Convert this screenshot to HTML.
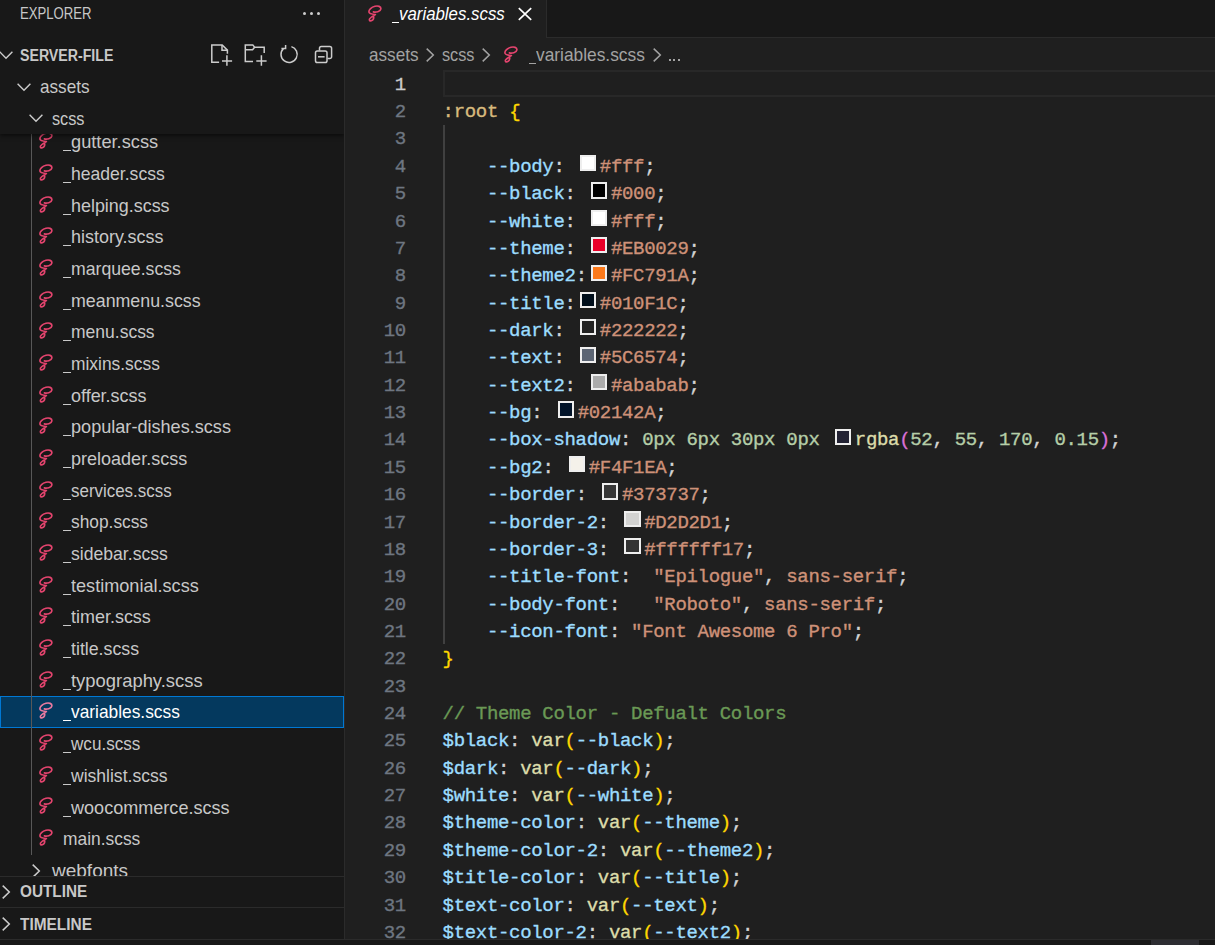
<!DOCTYPE html>
<html><head><meta charset="utf-8"><title>_variables.scss</title>
<style>
html,body{margin:0;padding:0;background:#1f1f1f;overflow:hidden}
body{width:1215px;height:945px;position:relative;font-family:"Liberation Sans",sans-serif}
.ab,.t,.sass{position:absolute}
.t{white-space:pre;transform-origin:0 50%;}
#side{position:absolute;left:0;top:0;width:344px;height:945px;background:#181818;overflow:hidden}
#sideborder{position:absolute;left:344px;top:0;width:1px;height:945px;background:#2b2b2b}
#ed{position:absolute;left:345px;top:0;width:870px;height:945px;background:#1f1f1f;overflow:hidden}
.ln,.cl{position:absolute;font-family:"Liberation Mono",monospace;white-space:pre;-webkit-text-stroke:0.35px;font-size:19.00px;line-height:27.36px;height:27.36px;letter-spacing:-0.316px;}
.ln{color:#6e7681;text-align:right}
.cl{color:#d4d4d4}
.sw{display:inline-block;position:relative;vertical-align:top}
.sw i{position:absolute;box-sizing:border-box;border:2px solid #eeeeee}
.p{color:#9cdcfe}.s{color:#ce9178}.n{color:#b5cea8}.f{color:#dcdcaa}.c{color:#6a9955}.y{color:#ffd700}.m{color:#da70d6}.r{color:#d7ba7d}.w{color:#d4d4d4}
</style></head><body>

<div id="side">
<svg class="sass" style="left:37.90px;top:131.14px" width="16" height="19" viewBox="-1 -1 16 19"><path d="M5.4 6.9C7.6 7.5 12.5 6.8 12.9 3.8C13.1 1.4 10 0.6 7 1.3C3.4 2.2 0.7 4.8 0.9 7C1.1 9 4.4 9.3 7.4 9.6C5.8 10.5 2.6 12.3 1.6 13.9C0.8 15.4 2 16.1 3.3 15.7C5 15.1 6 13.3 5.6 11.4" fill="none" stroke="#e4446e" stroke-width="1.65" stroke-linecap="round" stroke-linejoin="round"/></svg>
<div class="ab" style="left:63.40px;top:150px;width:7.27px;height:1.2px;background:#c8c8c8"></div><span class="t" style="transform:scaleX(0.9747);left:70.97px;top:126.84px;font-size:18.72px;line-height:29.95px;color:#c8c8c8;font-weight:normal;font-style:normal;transform-origin:0 21.46px;">gutter.scss</span>
<svg class="sass" style="left:37.90px;top:162.82px" width="16" height="19" viewBox="-1 -1 16 19"><path d="M5.4 6.9C7.6 7.5 12.5 6.8 12.9 3.8C13.1 1.4 10 0.6 7 1.3C3.4 2.2 0.7 4.8 0.9 7C1.1 9 4.4 9.3 7.4 9.6C5.8 10.5 2.6 12.3 1.6 13.9C0.8 15.4 2 16.1 3.3 15.7C5 15.1 6 13.3 5.6 11.4" fill="none" stroke="#e4446e" stroke-width="1.65" stroke-linecap="round" stroke-linejoin="round"/></svg>
<div class="ab" style="left:63.40px;top:182px;width:7.27px;height:1.2px;background:#c8c8c8"></div><span class="t" style="transform:scaleX(0.9394);left:70.97px;top:158.84px;font-size:18.72px;line-height:29.95px;color:#c8c8c8;font-weight:normal;font-style:normal;transform-origin:0 21.46px;">header.scss</span>
<svg class="sass" style="left:37.90px;top:194.50px" width="16" height="19" viewBox="-1 -1 16 19"><path d="M5.4 6.9C7.6 7.5 12.5 6.8 12.9 3.8C13.1 1.4 10 0.6 7 1.3C3.4 2.2 0.7 4.8 0.9 7C1.1 9 4.4 9.3 7.4 9.6C5.8 10.5 2.6 12.3 1.6 13.9C0.8 15.4 2 16.1 3.3 15.7C5 15.1 6 13.3 5.6 11.4" fill="none" stroke="#e4446e" stroke-width="1.65" stroke-linecap="round" stroke-linejoin="round"/></svg>
<div class="ab" style="left:63.40px;top:214px;width:7.27px;height:1.2px;background:#c8c8c8"></div><span class="t" style="transform:scaleX(0.9578);left:70.97px;top:190.84px;font-size:18.72px;line-height:29.95px;color:#c8c8c8;font-weight:normal;font-style:normal;transform-origin:0 21.46px;">helping.scss</span>
<svg class="sass" style="left:37.90px;top:226.18px" width="16" height="19" viewBox="-1 -1 16 19"><path d="M5.4 6.9C7.6 7.5 12.5 6.8 12.9 3.8C13.1 1.4 10 0.6 7 1.3C3.4 2.2 0.7 4.8 0.9 7C1.1 9 4.4 9.3 7.4 9.6C5.8 10.5 2.6 12.3 1.6 13.9C0.8 15.4 2 16.1 3.3 15.7C5 15.1 6 13.3 5.6 11.4" fill="none" stroke="#e4446e" stroke-width="1.65" stroke-linecap="round" stroke-linejoin="round"/></svg>
<div class="ab" style="left:63.40px;top:245px;width:7.27px;height:1.2px;background:#c8c8c8"></div><span class="t" style="transform:scaleX(0.9602);left:70.97px;top:221.84px;font-size:18.72px;line-height:29.95px;color:#c8c8c8;font-weight:normal;font-style:normal;transform-origin:0 21.46px;">history.scss</span>
<svg class="sass" style="left:37.90px;top:257.86px" width="16" height="19" viewBox="-1 -1 16 19"><path d="M5.4 6.9C7.6 7.5 12.5 6.8 12.9 3.8C13.1 1.4 10 0.6 7 1.3C3.4 2.2 0.7 4.8 0.9 7C1.1 9 4.4 9.3 7.4 9.6C5.8 10.5 2.6 12.3 1.6 13.9C0.8 15.4 2 16.1 3.3 15.7C5 15.1 6 13.3 5.6 11.4" fill="none" stroke="#e4446e" stroke-width="1.65" stroke-linecap="round" stroke-linejoin="round"/></svg>
<div class="ab" style="left:63.40px;top:277px;width:7.27px;height:1.2px;background:#c8c8c8"></div><span class="t" style="transform:scaleX(0.9439);left:70.97px;top:253.84px;font-size:18.72px;line-height:29.95px;color:#c8c8c8;font-weight:normal;font-style:normal;transform-origin:0 21.46px;">marquee.scss</span>
<svg class="sass" style="left:37.90px;top:289.54px" width="16" height="19" viewBox="-1 -1 16 19"><path d="M5.4 6.9C7.6 7.5 12.5 6.8 12.9 3.8C13.1 1.4 10 0.6 7 1.3C3.4 2.2 0.7 4.8 0.9 7C1.1 9 4.4 9.3 7.4 9.6C5.8 10.5 2.6 12.3 1.6 13.9C0.8 15.4 2 16.1 3.3 15.7C5 15.1 6 13.3 5.6 11.4" fill="none" stroke="#e4446e" stroke-width="1.65" stroke-linecap="round" stroke-linejoin="round"/></svg>
<div class="ab" style="left:63.40px;top:309px;width:7.27px;height:1.2px;background:#c8c8c8"></div><span class="t" style="transform:scaleX(0.9520);left:70.97px;top:285.84px;font-size:18.72px;line-height:29.95px;color:#c8c8c8;font-weight:normal;font-style:normal;transform-origin:0 21.46px;">meanmenu.scss</span>
<svg class="sass" style="left:37.90px;top:321.22px" width="16" height="19" viewBox="-1 -1 16 19"><path d="M5.4 6.9C7.6 7.5 12.5 6.8 12.9 3.8C13.1 1.4 10 0.6 7 1.3C3.4 2.2 0.7 4.8 0.9 7C1.1 9 4.4 9.3 7.4 9.6C5.8 10.5 2.6 12.3 1.6 13.9C0.8 15.4 2 16.1 3.3 15.7C5 15.1 6 13.3 5.6 11.4" fill="none" stroke="#e4446e" stroke-width="1.65" stroke-linecap="round" stroke-linejoin="round"/></svg>
<div class="ab" style="left:63.40px;top:340px;width:7.27px;height:1.2px;background:#c8c8c8"></div><span class="t" style="transform:scaleX(0.9355);left:70.97px;top:316.84px;font-size:18.72px;line-height:29.95px;color:#c8c8c8;font-weight:normal;font-style:normal;transform-origin:0 21.46px;">menu.scss</span>
<svg class="sass" style="left:37.90px;top:352.90px" width="16" height="19" viewBox="-1 -1 16 19"><path d="M5.4 6.9C7.6 7.5 12.5 6.8 12.9 3.8C13.1 1.4 10 0.6 7 1.3C3.4 2.2 0.7 4.8 0.9 7C1.1 9 4.4 9.3 7.4 9.6C5.8 10.5 2.6 12.3 1.6 13.9C0.8 15.4 2 16.1 3.3 15.7C5 15.1 6 13.3 5.6 11.4" fill="none" stroke="#e4446e" stroke-width="1.65" stroke-linecap="round" stroke-linejoin="round"/></svg>
<div class="ab" style="left:63.40px;top:372px;width:7.27px;height:1.2px;background:#c8c8c8"></div><span class="t" style="transform:scaleX(0.9291);left:70.97px;top:348.84px;font-size:18.72px;line-height:29.95px;color:#c8c8c8;font-weight:normal;font-style:normal;transform-origin:0 21.46px;">mixins.scss</span>
<svg class="sass" style="left:37.90px;top:384.58px" width="16" height="19" viewBox="-1 -1 16 19"><path d="M5.4 6.9C7.6 7.5 12.5 6.8 12.9 3.8C13.1 1.4 10 0.6 7 1.3C3.4 2.2 0.7 4.8 0.9 7C1.1 9 4.4 9.3 7.4 9.6C5.8 10.5 2.6 12.3 1.6 13.9C0.8 15.4 2 16.1 3.3 15.7C5 15.1 6 13.3 5.6 11.4" fill="none" stroke="#e4446e" stroke-width="1.65" stroke-linecap="round" stroke-linejoin="round"/></svg>
<div class="ab" style="left:63.40px;top:404px;width:7.27px;height:1.2px;background:#c8c8c8"></div><span class="t" style="transform:scaleX(0.9599);left:70.97px;top:380.84px;font-size:18.72px;line-height:29.95px;color:#c8c8c8;font-weight:normal;font-style:normal;transform-origin:0 21.46px;">offer.scss</span>
<svg class="sass" style="left:37.90px;top:416.26px" width="16" height="19" viewBox="-1 -1 16 19"><path d="M5.4 6.9C7.6 7.5 12.5 6.8 12.9 3.8C13.1 1.4 10 0.6 7 1.3C3.4 2.2 0.7 4.8 0.9 7C1.1 9 4.4 9.3 7.4 9.6C5.8 10.5 2.6 12.3 1.6 13.9C0.8 15.4 2 16.1 3.3 15.7C5 15.1 6 13.3 5.6 11.4" fill="none" stroke="#e4446e" stroke-width="1.65" stroke-linecap="round" stroke-linejoin="round"/></svg>
<div class="ab" style="left:63.40px;top:435px;width:7.27px;height:1.2px;background:#c8c8c8"></div><span class="t" style="transform:scaleX(0.9678);left:70.97px;top:411.84px;font-size:18.72px;line-height:29.95px;color:#c8c8c8;font-weight:normal;font-style:normal;transform-origin:0 21.46px;">popular-dishes.scss</span>
<svg class="sass" style="left:37.90px;top:447.94px" width="16" height="19" viewBox="-1 -1 16 19"><path d="M5.4 6.9C7.6 7.5 12.5 6.8 12.9 3.8C13.1 1.4 10 0.6 7 1.3C3.4 2.2 0.7 4.8 0.9 7C1.1 9 4.4 9.3 7.4 9.6C5.8 10.5 2.6 12.3 1.6 13.9C0.8 15.4 2 16.1 3.3 15.7C5 15.1 6 13.3 5.6 11.4" fill="none" stroke="#e4446e" stroke-width="1.65" stroke-linecap="round" stroke-linejoin="round"/></svg>
<div class="ab" style="left:63.40px;top:467px;width:7.27px;height:1.2px;background:#c8c8c8"></div><span class="t" style="transform:scaleX(0.9635);left:70.97px;top:443.84px;font-size:18.72px;line-height:29.95px;color:#c8c8c8;font-weight:normal;font-style:normal;transform-origin:0 21.46px;">preloader.scss</span>
<svg class="sass" style="left:37.90px;top:479.62px" width="16" height="19" viewBox="-1 -1 16 19"><path d="M5.4 6.9C7.6 7.5 12.5 6.8 12.9 3.8C13.1 1.4 10 0.6 7 1.3C3.4 2.2 0.7 4.8 0.9 7C1.1 9 4.4 9.3 7.4 9.6C5.8 10.5 2.6 12.3 1.6 13.9C0.8 15.4 2 16.1 3.3 15.7C5 15.1 6 13.3 5.6 11.4" fill="none" stroke="#e4446e" stroke-width="1.65" stroke-linecap="round" stroke-linejoin="round"/></svg>
<div class="ab" style="left:63.40px;top:499px;width:7.27px;height:1.2px;background:#c8c8c8"></div><span class="t" style="transform:scaleX(0.9050);left:70.97px;top:475.84px;font-size:18.72px;line-height:29.95px;color:#c8c8c8;font-weight:normal;font-style:normal;transform-origin:0 21.46px;">services.scss</span>
<svg class="sass" style="left:37.90px;top:511.30px" width="16" height="19" viewBox="-1 -1 16 19"><path d="M5.4 6.9C7.6 7.5 12.5 6.8 12.9 3.8C13.1 1.4 10 0.6 7 1.3C3.4 2.2 0.7 4.8 0.9 7C1.1 9 4.4 9.3 7.4 9.6C5.8 10.5 2.6 12.3 1.6 13.9C0.8 15.4 2 16.1 3.3 15.7C5 15.1 6 13.3 5.6 11.4" fill="none" stroke="#e4446e" stroke-width="1.65" stroke-linecap="round" stroke-linejoin="round"/></svg>
<div class="ab" style="left:63.40px;top:530px;width:7.27px;height:1.2px;background:#c8c8c8"></div><span class="t" style="transform:scaleX(0.9262);left:70.97px;top:506.84px;font-size:18.72px;line-height:29.95px;color:#c8c8c8;font-weight:normal;font-style:normal;transform-origin:0 21.46px;">shop.scss</span>
<svg class="sass" style="left:37.90px;top:542.98px" width="16" height="19" viewBox="-1 -1 16 19"><path d="M5.4 6.9C7.6 7.5 12.5 6.8 12.9 3.8C13.1 1.4 10 0.6 7 1.3C3.4 2.2 0.7 4.8 0.9 7C1.1 9 4.4 9.3 7.4 9.6C5.8 10.5 2.6 12.3 1.6 13.9C0.8 15.4 2 16.1 3.3 15.7C5 15.1 6 13.3 5.6 11.4" fill="none" stroke="#e4446e" stroke-width="1.65" stroke-linecap="round" stroke-linejoin="round"/></svg>
<div class="ab" style="left:63.40px;top:562px;width:7.27px;height:1.2px;background:#c8c8c8"></div><span class="t" style="transform:scaleX(0.9411);left:70.97px;top:538.84px;font-size:18.72px;line-height:29.95px;color:#c8c8c8;font-weight:normal;font-style:normal;transform-origin:0 21.46px;">sidebar.scss</span>
<svg class="sass" style="left:37.90px;top:574.66px" width="16" height="19" viewBox="-1 -1 16 19"><path d="M5.4 6.9C7.6 7.5 12.5 6.8 12.9 3.8C13.1 1.4 10 0.6 7 1.3C3.4 2.2 0.7 4.8 0.9 7C1.1 9 4.4 9.3 7.4 9.6C5.8 10.5 2.6 12.3 1.6 13.9C0.8 15.4 2 16.1 3.3 15.7C5 15.1 6 13.3 5.6 11.4" fill="none" stroke="#e4446e" stroke-width="1.65" stroke-linecap="round" stroke-linejoin="round"/></svg>
<div class="ab" style="left:63.40px;top:594px;width:7.27px;height:1.2px;background:#c8c8c8"></div><span class="t" style="transform:scaleX(0.9678);left:70.97px;top:570.84px;font-size:18.72px;line-height:29.95px;color:#c8c8c8;font-weight:normal;font-style:normal;transform-origin:0 21.46px;">testimonial.scss</span>
<svg class="sass" style="left:37.90px;top:606.34px" width="16" height="19" viewBox="-1 -1 16 19"><path d="M5.4 6.9C7.6 7.5 12.5 6.8 12.9 3.8C13.1 1.4 10 0.6 7 1.3C3.4 2.2 0.7 4.8 0.9 7C1.1 9 4.4 9.3 7.4 9.6C5.8 10.5 2.6 12.3 1.6 13.9C0.8 15.4 2 16.1 3.3 15.7C5 15.1 6 13.3 5.6 11.4" fill="none" stroke="#e4446e" stroke-width="1.65" stroke-linecap="round" stroke-linejoin="round"/></svg>
<div class="ab" style="left:63.40px;top:625px;width:7.27px;height:1.2px;background:#c8c8c8"></div><span class="t" style="transform:scaleX(0.9601);left:70.97px;top:601.84px;font-size:18.72px;line-height:29.95px;color:#c8c8c8;font-weight:normal;font-style:normal;transform-origin:0 21.46px;">timer.scss</span>
<svg class="sass" style="left:37.90px;top:638.02px" width="16" height="19" viewBox="-1 -1 16 19"><path d="M5.4 6.9C7.6 7.5 12.5 6.8 12.9 3.8C13.1 1.4 10 0.6 7 1.3C3.4 2.2 0.7 4.8 0.9 7C1.1 9 4.4 9.3 7.4 9.6C5.8 10.5 2.6 12.3 1.6 13.9C0.8 15.4 2 16.1 3.3 15.7C5 15.1 6 13.3 5.6 11.4" fill="none" stroke="#e4446e" stroke-width="1.65" stroke-linecap="round" stroke-linejoin="round"/></svg>
<div class="ab" style="left:63.40px;top:657px;width:7.27px;height:1.2px;background:#c8c8c8"></div><span class="t" style="transform:scaleX(0.9491);left:70.97px;top:633.84px;font-size:18.72px;line-height:29.95px;color:#c8c8c8;font-weight:normal;font-style:normal;transform-origin:0 21.46px;">title.scss</span>
<svg class="sass" style="left:37.90px;top:669.70px" width="16" height="19" viewBox="-1 -1 16 19"><path d="M5.4 6.9C7.6 7.5 12.5 6.8 12.9 3.8C13.1 1.4 10 0.6 7 1.3C3.4 2.2 0.7 4.8 0.9 7C1.1 9 4.4 9.3 7.4 9.6C5.8 10.5 2.6 12.3 1.6 13.9C0.8 15.4 2 16.1 3.3 15.7C5 15.1 6 13.3 5.6 11.4" fill="none" stroke="#e4446e" stroke-width="1.65" stroke-linecap="round" stroke-linejoin="round"/></svg>
<div class="ab" style="left:63.40px;top:689px;width:7.27px;height:1.2px;background:#c8c8c8"></div><span class="t" style="transform:scaleX(0.9841);left:70.97px;top:665.84px;font-size:18.72px;line-height:29.95px;color:#c8c8c8;font-weight:normal;font-style:normal;transform-origin:0 21.46px;">typography.scss</span>
<div class="ab" style="left:0;top:696.14px;width:344px;height:31.68px;background:#04395e;box-sizing:border-box;border:1px solid #0078d4"></div>
<svg class="sass" style="left:37.90px;top:701.38px" width="16" height="19" viewBox="-1 -1 16 19"><path d="M5.4 6.9C7.6 7.5 12.5 6.8 12.9 3.8C13.1 1.4 10 0.6 7 1.3C3.4 2.2 0.7 4.8 0.9 7C1.1 9 4.4 9.3 7.4 9.6C5.8 10.5 2.6 12.3 1.6 13.9C0.8 15.4 2 16.1 3.3 15.7C5 15.1 6 13.3 5.6 11.4" fill="none" stroke="#ea7aa0" stroke-width="1.65" stroke-linecap="round" stroke-linejoin="round"/></svg>
<div class="ab" style="left:63.40px;top:720px;width:7.27px;height:1.2px;background:#ffffff"></div><span class="t" style="transform:scaleX(0.9268);left:70.97px;top:696.84px;font-size:18.72px;line-height:29.95px;color:#ffffff;font-weight:normal;font-style:normal;transform-origin:0 21.46px;">variables.scss</span>
<svg class="sass" style="left:37.90px;top:733.06px" width="16" height="19" viewBox="-1 -1 16 19"><path d="M5.4 6.9C7.6 7.5 12.5 6.8 12.9 3.8C13.1 1.4 10 0.6 7 1.3C3.4 2.2 0.7 4.8 0.9 7C1.1 9 4.4 9.3 7.4 9.6C5.8 10.5 2.6 12.3 1.6 13.9C0.8 15.4 2 16.1 3.3 15.7C5 15.1 6 13.3 5.6 11.4" fill="none" stroke="#e4446e" stroke-width="1.65" stroke-linecap="round" stroke-linejoin="round"/></svg>
<div class="ab" style="left:63.40px;top:752px;width:7.27px;height:1.2px;background:#c8c8c8"></div><span class="t" style="transform:scaleX(0.9134);left:70.97px;top:728.84px;font-size:18.72px;line-height:29.95px;color:#c8c8c8;font-weight:normal;font-style:normal;transform-origin:0 21.46px;">wcu.scss</span>
<svg class="sass" style="left:37.90px;top:764.74px" width="16" height="19" viewBox="-1 -1 16 19"><path d="M5.4 6.9C7.6 7.5 12.5 6.8 12.9 3.8C13.1 1.4 10 0.6 7 1.3C3.4 2.2 0.7 4.8 0.9 7C1.1 9 4.4 9.3 7.4 9.6C5.8 10.5 2.6 12.3 1.6 13.9C0.8 15.4 2 16.1 3.3 15.7C5 15.1 6 13.3 5.6 11.4" fill="none" stroke="#e4446e" stroke-width="1.65" stroke-linecap="round" stroke-linejoin="round"/></svg>
<div class="ab" style="left:63.40px;top:784px;width:7.27px;height:1.2px;background:#c8c8c8"></div><span class="t" style="transform:scaleX(0.9375);left:70.97px;top:760.84px;font-size:18.72px;line-height:29.95px;color:#c8c8c8;font-weight:normal;font-style:normal;transform-origin:0 21.46px;">wishlist.scss</span>
<svg class="sass" style="left:37.90px;top:796.42px" width="16" height="19" viewBox="-1 -1 16 19"><path d="M5.4 6.9C7.6 7.5 12.5 6.8 12.9 3.8C13.1 1.4 10 0.6 7 1.3C3.4 2.2 0.7 4.8 0.9 7C1.1 9 4.4 9.3 7.4 9.6C5.8 10.5 2.6 12.3 1.6 13.9C0.8 15.4 2 16.1 3.3 15.7C5 15.1 6 13.3 5.6 11.4" fill="none" stroke="#e4446e" stroke-width="1.65" stroke-linecap="round" stroke-linejoin="round"/></svg>
<div class="ab" style="left:63.40px;top:816px;width:7.27px;height:1.2px;background:#c8c8c8"></div><span class="t" style="transform:scaleX(0.9658);left:70.97px;top:792.84px;font-size:18.72px;line-height:29.95px;color:#c8c8c8;font-weight:normal;font-style:normal;transform-origin:0 21.46px;">woocommerce.scss</span>
<svg class="sass" style="left:37.90px;top:828.10px" width="16" height="19" viewBox="-1 -1 16 19"><path d="M5.4 6.9C7.6 7.5 12.5 6.8 12.9 3.8C13.1 1.4 10 0.6 7 1.3C3.4 2.2 0.7 4.8 0.9 7C1.1 9 4.4 9.3 7.4 9.6C5.8 10.5 2.6 12.3 1.6 13.9C0.8 15.4 2 16.1 3.3 15.7C5 15.1 6 13.3 5.6 11.4" fill="none" stroke="#e4446e" stroke-width="1.65" stroke-linecap="round" stroke-linejoin="round"/></svg>
<span class="t" style="transform:scaleX(0.9295);left:63.20px;top:823.84px;font-size:18.72px;line-height:29.95px;color:#c8c8c8;font-weight:normal;font-style:normal;transform-origin:0 21.46px;">main.scss</span>
<svg class="ab" style="left:25.80px;top:860.88px" width="20" height="20" viewBox="-10 -10 20 20"><path d="M-3.3 -6.4 L3.3 0 L-3.3 6.4" fill="none" stroke="#cccccc" stroke-width="1.5"/></svg>
<span class="t" style="transform:scaleX(1.0158);left:51.80px;top:855.84px;font-size:18.72px;line-height:29.95px;color:#c8c8c8;font-weight:normal;font-style:normal;transform-origin:0 21.46px;">webfonts</span>
<div class="ab" style="left:31px;top:133px;width:1px;height:721.54px;background:#585858"></div>
<div class="ab" style="left:0;top:0;width:344px;height:134.2px;background:#181818;box-shadow:0 2px 4px rgba(0,0,0,.5)"></div>
<span class="t" style="transform:scale(0.8594,1.060);left:20.40px;top:1.86px;font-size:15.30px;line-height:24.48px;color:#c8c8c8;font-weight:normal;font-style:normal;transform-origin:0 17.54px;">EXPLORER</span>
<div class="ab" style="left:302.60px;top:11.7px;width:3.4px;height:3.4px;border-radius:50%;background:#cccccc"></div>
<div class="ab" style="left:309.70px;top:11.7px;width:3.4px;height:3.4px;border-radius:50%;background:#cccccc"></div>
<div class="ab" style="left:316.80px;top:11.7px;width:3.4px;height:3.4px;border-radius:50%;background:#cccccc"></div>
<svg class="ab" style="left:-3.70px;top:45.20px" width="20" height="20" viewBox="-10 -10 20 20"><path d="M-6.4 -3.3 L0 3.3 L6.4 -3.3" fill="none" stroke="#cccccc" stroke-width="1.4"/></svg>
<span class="t" style="transform:scale(0.9259,1.020);left:20.00px;top:43.76px;font-size:15.30px;line-height:24.48px;color:#c8c8c8;font-weight:bold;font-style:normal;transform-origin:0 17.54px;">SERVER-FILE</span>
<svg class="ab" style="left:208px;top:40px" width="130" height="30" viewBox="208 40 130 30" fill="none" stroke="#cccccc" stroke-width="1.5">
<path d="M219.1 62.3 H211.8 V44.9 H222.2 L227.4 50.1 V53.8"/><path d="M222 44.9 V50.3 H227.4"/><path d="M226.9 55.3 V65.8 M222 60.9 H232.1"/>
<path d="M253 61.6 H245.3 V44.9 H252.8 L254.6 47.3 H264.2 V53"/><path d="M245.3 49.8 H252.6 L254.6 47.3"/><path d="M261.4 55.3 V65.8 M256.3 60.9 H266.6"/>
<path d="M283.4 48.6 A8.1 8.1 0 1 0 291.4 46.6"/><path d="M281.4 48.6 H285.6 V44.9"/>
<rect x="315.5" y="51" width="11.5" height="11.5" rx="1.8"/><path d="M319.5 50.5 V48.3 A1.8 1.8 0 0 1 321.3 46.5 H329.8 A1.8 1.8 0 0 1 331.6 48.3 V56.8 A1.8 1.8 0 0 1 329.8 58.6 H327.5"/><path d="M318 56.8 H324.6"/>
</svg>
<svg class="ab" style="left:14.40px;top:76.90px" width="20" height="20" viewBox="-10 -10 20 20"><path d="M-6.4 -3.3 L0 3.3 L6.4 -3.3" fill="none" stroke="#cccccc" stroke-width="1.4"/></svg>
<span class="t" style="transform:scaleX(0.9152);left:40.30px;top:71.54px;font-size:18.72px;line-height:29.95px;color:#c8c8c8;font-weight:normal;font-style:normal;transform-origin:0 21.46px;">assets</span>
<svg class="ab" style="left:25.90px;top:108.10px" width="20" height="20" viewBox="-10 -10 20 20"><path d="M-6.4 -3.3 L0 3.3 L6.4 -3.3" fill="none" stroke="#cccccc" stroke-width="1.4"/></svg>
<span class="t" style="transform:scaleX(0.8678);left:51.80px;top:103.64px;font-size:18.72px;line-height:29.95px;color:#c8c8c8;font-weight:normal;font-style:normal;transform-origin:0 21.46px;">scss</span>
<div class="ab" style="left:0;top:875.6px;width:344px;height:32.68px;background:#181818;border-top:1px solid #2b2b2b"></div>
<svg class="ab" style="left:-4.00px;top:881.90px" width="20" height="20" viewBox="-10 -10 20 20"><path d="M-3.3 -6.4 L3.3 0 L-3.3 6.4" fill="none" stroke="#cccccc" stroke-width="1.5"/></svg>
<span class="t" style="transform:scale(1.0009,1.050);left:19.80px;top:880.16px;font-size:15.30px;line-height:24.48px;color:#c8c8c8;font-weight:bold;font-style:normal;transform-origin:0 17.54px;">OUTLINE</span>
<div class="ab" style="left:0;top:907.2px;width:344px;height:32.68px;background:#181818;border-top:1px solid #2b2b2b"></div>
<svg class="ab" style="left:-4.00px;top:913.50px" width="20" height="20" viewBox="-10 -10 20 20"><path d="M-3.3 -6.4 L3.3 0 L-3.3 6.4" fill="none" stroke="#cccccc" stroke-width="1.5"/></svg>
<span class="t" style="transform:scale(1.0085,1.050);left:19.80px;top:912.66px;font-size:15.30px;line-height:24.48px;color:#c8c8c8;font-weight:bold;font-style:normal;transform-origin:0 17.54px;">TIMELINE</span>
</div><div id="sideborder"></div>
<div id="ed">
<div class="ab" style="left:0;top:0;width:870px;height:37px;background:#181818;border-bottom:1.44px solid #2b2b2b"></div>
<div class="ab" style="left:0;top:0;width:201.3px;height:38px;background:#1f1f1f;border-right:1px solid #2b2b2b"></div>
<svg class="sass" style="left:21.60px;top:3.90px" width="16" height="19" viewBox="-1 -1 16 19"><path d="M5.4 6.9C7.6 7.5 12.5 6.8 12.9 3.8C13.1 1.4 10 0.6 7 1.3C3.4 2.2 0.7 4.8 0.9 7C1.1 9 4.4 9.3 7.4 9.6C5.8 10.5 2.6 12.3 1.6 13.9C0.8 15.4 2 16.1 3.3 15.7C5 15.1 6 13.3 5.6 11.4" fill="none" stroke="#e4446e" stroke-width="1.65" stroke-linecap="round" stroke-linejoin="round"/></svg>
<div class="ab" style="left:46.60px;top:22px;width:7.27px;height:1.2px;background:#ffffff"></div><span class="t" style="transform:scaleX(0.9002);left:54.17px;top:-0.96px;font-size:18.72px;line-height:29.95px;color:#ffffff;font-weight:normal;font-style:italic;transform-origin:0 21.46px;">variables.scss</span>
<svg class="ab" style="left:171.40px;top:4.60px" width="18" height="18" viewBox="-9 -9 18 18"><path d="M-6.2 -5.8 L6.2 5.8 M6.2 -5.8 L-6.2 5.8" stroke="#ffffff" stroke-width="1.7" fill="none"/></svg>
<span class="t" style="transform:scaleX(0.9152);left:24.20px;top:39.94px;font-size:18.72px;line-height:29.95px;color:#a3a3a3;font-weight:normal;font-style:normal;transform-origin:0 21.46px;">assets</span>
<svg class="ab" style="left:75.00px;top:45.20px" width="20" height="20" viewBox="-10 -10 20 20"><path d="M-3.3 -6.4 L3.3 0 L-3.3 6.4" fill="none" stroke="#a3a3a3" stroke-width="1.5"/></svg>
<span class="t" style="transform:scaleX(0.8678);left:96.80px;top:39.94px;font-size:18.72px;line-height:29.95px;color:#a3a3a3;font-weight:normal;font-style:normal;transform-origin:0 21.46px;">scss</span>
<svg class="ab" style="left:131.00px;top:45.20px" width="20" height="20" viewBox="-10 -10 20 20"><path d="M-3.3 -6.4 L3.3 0 L-3.3 6.4" fill="none" stroke="#a3a3a3" stroke-width="1.5"/></svg>
<svg class="sass" style="left:158.20px;top:45.20px" width="16" height="19" viewBox="-1 -1 16 19"><path d="M5.4 6.9C7.6 7.5 12.5 6.8 12.9 3.8C13.1 1.4 10 0.6 7 1.3C3.4 2.2 0.7 4.8 0.9 7C1.1 9 4.4 9.3 7.4 9.6C5.8 10.5 2.6 12.3 1.6 13.9C0.8 15.4 2 16.1 3.3 15.7C5 15.1 6 13.3 5.6 11.4" fill="none" stroke="#e4446e" stroke-width="1.65" stroke-linecap="round" stroke-linejoin="round"/></svg>
<div class="ab" style="left:183.80px;top:63px;width:7.27px;height:1.2px;background:#a3a3a3"></div><span class="t" style="transform:scaleX(0.9268);left:191.37px;top:39.94px;font-size:18.72px;line-height:29.95px;color:#a3a3a3;font-weight:normal;font-style:normal;transform-origin:0 21.46px;">variables.scss</span>
<svg class="ab" style="left:302.10px;top:45.20px" width="20" height="20" viewBox="-10 -10 20 20"><path d="M-3.3 -6.4 L3.3 0 L-3.3 6.4" fill="none" stroke="#a3a3a3" stroke-width="1.5"/></svg>
<div class="ab" style="left:323.60px;top:59.00px;width:2.2px;height:2.2px;background:#a3a3a3"></div>
<div class="ab" style="left:328.20px;top:59.00px;width:2.2px;height:2.2px;background:#a3a3a3"></div>
<div class="ab" style="left:332.80px;top:59.00px;width:2.2px;height:2.2px;background:#a3a3a3"></div>
<div class="ab" style="left:98.1px;top:70.10px;width:800px;height:26.86px;box-sizing:border-box;border:2px solid #282828"></div>
<div class="ab" style="left:98.1px;top:124.52px;width:1.44px;height:519.84px;background:#404040"></div>
<div class="ln" style="left:15px;width:45.82px;top:71.75px;color:#cccccc">1</div>
<div class="ln" style="left:15px;width:45.82px;top:99.11px;color:#6e7681">2</div>
<div class="cl" style="left:97.60px;top:99.11px"><span class="r">:root</span> <span class="y">{</span></div>
<div class="ln" style="left:15px;width:45.82px;top:126.47px;color:#6e7681">3</div>
<div class="ln" style="left:15px;width:45.82px;top:153.83px;color:#6e7681">4</div>
<div class="cl" style="left:97.60px;top:153.83px">    <span class="p">--body</span>: <span class="sw" style="width:24.19px;height:27.36px;letter-spacing:0"><i style="left:4.43px;top:1.25px;width:16.2px;height:16.2px;background:#fff"></i></span><span class="s">#fff</span>;</div>
<div class="ln" style="left:15px;width:45.82px;top:181.19px;color:#6e7681">5</div>
<div class="cl" style="left:97.60px;top:181.19px">    <span class="p">--black</span>: <span class="sw" style="width:24.19px;height:27.36px;letter-spacing:0"><i style="left:4.43px;top:1.25px;width:16.2px;height:16.2px;background:#000"></i></span><span class="s">#000</span>;</div>
<div class="ln" style="left:15px;width:45.82px;top:208.55px;color:#6e7681">6</div>
<div class="cl" style="left:97.60px;top:208.55px">    <span class="p">--white</span>: <span class="sw" style="width:24.19px;height:27.36px;letter-spacing:0"><i style="left:4.43px;top:1.25px;width:16.2px;height:16.2px;background:#fff"></i></span><span class="s">#fff</span>;</div>
<div class="ln" style="left:15px;width:45.82px;top:235.91px;color:#6e7681">7</div>
<div class="cl" style="left:97.60px;top:235.91px">    <span class="p">--theme</span>: <span class="sw" style="width:24.19px;height:27.36px;letter-spacing:0"><i style="left:4.43px;top:1.25px;width:16.2px;height:16.2px;background:#EB0029"></i></span><span class="s">#EB0029</span>;</div>
<div class="ln" style="left:15px;width:45.82px;top:263.27px;color:#6e7681">8</div>
<div class="cl" style="left:97.60px;top:263.27px">    <span class="p">--theme2</span>:<span class="sw" style="width:24.19px;height:27.36px;letter-spacing:0"><i style="left:4.43px;top:1.25px;width:16.2px;height:16.2px;background:#FC791A"></i></span><span class="s">#FC791A</span>;</div>
<div class="ln" style="left:15px;width:45.82px;top:290.63px;color:#6e7681">9</div>
<div class="cl" style="left:97.60px;top:290.63px">    <span class="p">--title</span>:<span class="sw" style="width:24.19px;height:27.36px;letter-spacing:0"><i style="left:4.43px;top:1.25px;width:16.2px;height:16.2px;background:#010F1C"></i></span><span class="s">#010F1C</span>;</div>
<div class="ln" style="left:15px;width:45.82px;top:317.99px;color:#6e7681">10</div>
<div class="cl" style="left:97.60px;top:317.99px">    <span class="p">--dark</span>: <span class="sw" style="width:24.19px;height:27.36px;letter-spacing:0"><i style="left:4.43px;top:1.25px;width:16.2px;height:16.2px;background:#222222"></i></span><span class="s">#222222</span>;</div>
<div class="ln" style="left:15px;width:45.82px;top:345.35px;color:#6e7681">11</div>
<div class="cl" style="left:97.60px;top:345.35px">    <span class="p">--text</span>: <span class="sw" style="width:24.19px;height:27.36px;letter-spacing:0"><i style="left:4.43px;top:1.25px;width:16.2px;height:16.2px;background:#5C6574"></i></span><span class="s">#5C6574</span>;</div>
<div class="ln" style="left:15px;width:45.82px;top:372.71px;color:#6e7681">12</div>
<div class="cl" style="left:97.60px;top:372.71px">    <span class="p">--text2</span>: <span class="sw" style="width:24.19px;height:27.36px;letter-spacing:0"><i style="left:4.43px;top:1.25px;width:16.2px;height:16.2px;background:#ababab"></i></span><span class="s">#ababab</span>;</div>
<div class="ln" style="left:15px;width:45.82px;top:400.07px;color:#6e7681">13</div>
<div class="cl" style="left:97.60px;top:400.07px">    <span class="p">--bg</span>: <span class="sw" style="width:24.19px;height:27.36px;letter-spacing:0"><i style="left:4.43px;top:1.25px;width:16.2px;height:16.2px;background:#02142A"></i></span><span class="s">#02142A</span>;</div>
<div class="ln" style="left:15px;width:45.82px;top:427.43px;color:#6e7681">14</div>
<div class="cl" style="left:97.60px;top:427.43px">    <span class="p">--box-shadow</span>: <span class="n">0px</span> <span class="n">6px</span> <span class="n">30px</span> <span class="n">0px</span> <span class="sw" style="width:24.19px;height:27.36px;letter-spacing:0"><i style="left:4.43px;top:1.25px;width:16.2px;height:16.2px;background:rgba(52,55,170,0.15)"></i></span><span class="f">rgba</span><span class="m">(</span><span class="n">52</span>, <span class="n">55</span>, <span class="n">170</span>, <span class="n">0.15</span><span class="m">)</span>;</div>
<div class="ln" style="left:15px;width:45.82px;top:454.79px;color:#6e7681">15</div>
<div class="cl" style="left:97.60px;top:454.79px">    <span class="p">--bg2</span>: <span class="sw" style="width:24.19px;height:27.36px;letter-spacing:0"><i style="left:4.43px;top:1.25px;width:16.2px;height:16.2px;background:#F4F1EA"></i></span><span class="s">#F4F1EA</span>;</div>
<div class="ln" style="left:15px;width:45.82px;top:482.15px;color:#6e7681">16</div>
<div class="cl" style="left:97.60px;top:482.15px">    <span class="p">--border</span>: <span class="sw" style="width:24.19px;height:27.36px;letter-spacing:0"><i style="left:4.43px;top:1.25px;width:16.2px;height:16.2px;background:#373737"></i></span><span class="s">#373737</span>;</div>
<div class="ln" style="left:15px;width:45.82px;top:509.51px;color:#6e7681">17</div>
<div class="cl" style="left:97.60px;top:509.51px">    <span class="p">--border-2</span>: <span class="sw" style="width:24.19px;height:27.36px;letter-spacing:0"><i style="left:4.43px;top:1.25px;width:16.2px;height:16.2px;background:#D2D2D1"></i></span><span class="s">#D2D2D1</span>;</div>
<div class="ln" style="left:15px;width:45.82px;top:536.87px;color:#6e7681">18</div>
<div class="cl" style="left:97.60px;top:536.87px">    <span class="p">--border-3</span>: <span class="sw" style="width:24.19px;height:27.36px;letter-spacing:0"><i style="left:4.43px;top:1.25px;width:16.2px;height:16.2px;background:rgba(255,255,255,0.09)"></i></span><span class="s">#ffffff17</span>;</div>
<div class="ln" style="left:15px;width:45.82px;top:564.23px;color:#6e7681">19</div>
<div class="cl" style="left:97.60px;top:564.23px">    <span class="p">--title-font</span>:  <span class="s">"Epilogue"</span>, <span class="s">sans-serif</span>;</div>
<div class="ln" style="left:15px;width:45.82px;top:591.59px;color:#6e7681">20</div>
<div class="cl" style="left:97.60px;top:591.59px">    <span class="p">--body-font</span>:   <span class="s">"Roboto"</span>, <span class="s">sans-serif</span>;</div>
<div class="ln" style="left:15px;width:45.82px;top:618.95px;color:#6e7681">21</div>
<div class="cl" style="left:97.60px;top:618.95px">    <span class="p">--icon-font</span>: <span class="s">"Font Awesome 6 Pro"</span>;</div>
<div class="ln" style="left:15px;width:45.82px;top:646.31px;color:#6e7681">22</div>
<div class="cl" style="left:97.60px;top:646.31px"><span class="y">}</span></div>
<div class="ln" style="left:15px;width:45.82px;top:673.67px;color:#6e7681">23</div>
<div class="ln" style="left:15px;width:45.82px;top:701.03px;color:#6e7681">24</div>
<div class="cl" style="left:97.60px;top:701.03px"><span class="c">// Theme Color - Defualt Colors</span></div>
<div class="ln" style="left:15px;width:45.82px;top:728.39px;color:#6e7681">25</div>
<div class="cl" style="left:97.60px;top:728.39px"><span class="p">$black</span>: <span class="f">var</span><span class="y">(</span><span class="p">--black</span><span class="y">)</span>;</div>
<div class="ln" style="left:15px;width:45.82px;top:755.75px;color:#6e7681">26</div>
<div class="cl" style="left:97.60px;top:755.75px"><span class="p">$dark</span>: <span class="f">var</span><span class="y">(</span><span class="p">--dark</span><span class="y">)</span>;</div>
<div class="ln" style="left:15px;width:45.82px;top:783.11px;color:#6e7681">27</div>
<div class="cl" style="left:97.60px;top:783.11px"><span class="p">$white</span>: <span class="f">var</span><span class="y">(</span><span class="p">--white</span><span class="y">)</span>;</div>
<div class="ln" style="left:15px;width:45.82px;top:810.47px;color:#6e7681">28</div>
<div class="cl" style="left:97.60px;top:810.47px"><span class="p">$theme-color</span>: <span class="f">var</span><span class="y">(</span><span class="p">--theme</span><span class="y">)</span>;</div>
<div class="ln" style="left:15px;width:45.82px;top:837.83px;color:#6e7681">29</div>
<div class="cl" style="left:97.60px;top:837.83px"><span class="p">$theme-color-2</span>: <span class="f">var</span><span class="y">(</span><span class="p">--theme2</span><span class="y">)</span>;</div>
<div class="ln" style="left:15px;width:45.82px;top:865.19px;color:#6e7681">30</div>
<div class="cl" style="left:97.60px;top:865.19px"><span class="p">$title-color</span>: <span class="f">var</span><span class="y">(</span><span class="p">--title</span><span class="y">)</span>;</div>
<div class="ln" style="left:15px;width:45.82px;top:892.55px;color:#6e7681">31</div>
<div class="cl" style="left:97.60px;top:892.55px"><span class="p">$text-color</span>: <span class="f">var</span><span class="y">(</span><span class="p">--text</span><span class="y">)</span>;</div>
<div class="ln" style="left:15px;width:45.82px;top:919.91px;color:#6e7681">32</div>
<div class="cl" style="left:97.60px;top:919.91px"><span class="p">$text-color-2</span>: <span class="f">var</span><span class="y">(</span><span class="p">--text2</span><span class="y">)</span>;</div>
</div>
<div class="ab" style="left:0;top:938.8px;width:1215px;height:7px;background:#181818;border-top:1px solid #2b2b2b"></div>
<div class="ab" style="left:1151px;top:940.4px;width:48px;height:5px;background:#2d2d32"></div>
</body></html>
